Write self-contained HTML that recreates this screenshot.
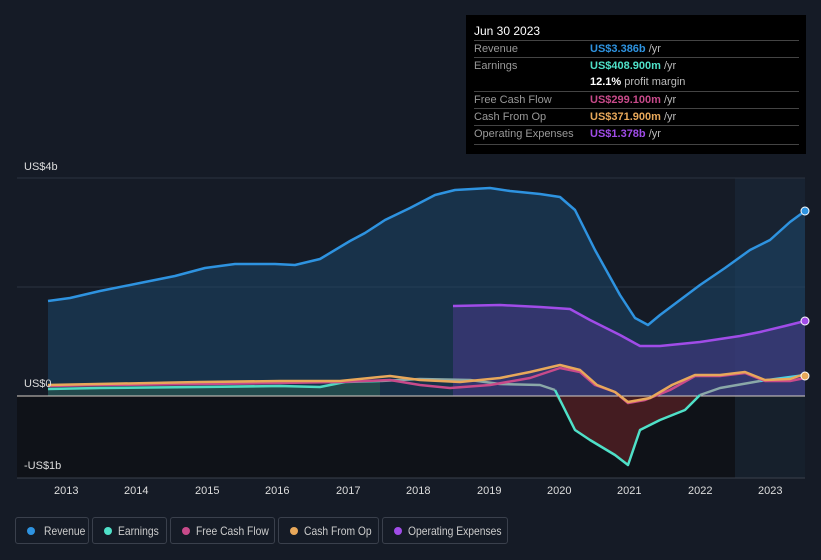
<!DOCTYPE html><html><head><style>
body{margin:0;width:821px;height:560px;background:#151b26;font-family:"Liberation Sans",sans-serif;overflow:hidden;position:relative}
.tt{position:absolute;left:466px;top:15px;width:340px;height:139px;background:#000;color:#fff;font-size:11px}
.tt .h{position:absolute;left:8px;top:9px;font-size:12px}
.row{position:absolute;left:8px;width:325px;border-top:1px solid #444;height:17px;line-height:17px}
.row span.l{color:#999;position:absolute;left:0}
.row span.v{position:absolute;left:116px;font-weight:bold;white-space:nowrap}
.row i{font-style:normal;color:#bbb;font-weight:normal}
.ax{position:absolute;color:#ddd;font-size:11px}
.lg{position:absolute;top:517px;height:27px;border:1px solid #3a404c;border-radius:3px;color:#ccc;font-size:12px;line-height:26px;box-sizing:border-box;white-space:nowrap}
.lg b{position:absolute;left:11px;top:9px;width:8px;height:8px;border-radius:50%}
.lg span{position:absolute;display:inline-block;transform:scaleX(0.86);transform-origin:left center}
</style></head><body>
<svg width="821" height="560" style="position:absolute;left:0;top:0">
<rect x="17" y="396" width="788" height="82" fill="#0f1218"/>
<rect x="735" y="178" width="70" height="300" fill="#1a2a3a" opacity="0.6"/>
<line x1="17" y1="178" x2="805" y2="178" stroke="#2c3340"/>
<line x1="17" y1="287" x2="805" y2="287" stroke="#2c3340"/>
<line x1="17" y1="478" x2="805" y2="478" stroke="#3a404c"/>
<path d="M48,301 L70,298 100,291 140,283 175,276 205,268 235,264 275,264 295,265 320,259 350,241 365,233 385,220 410,208 435,195 455,190 490,188 510,191 540,194 560,197 575,210 595,250 620,295 635,318 648,325 660,315 680,300 700,285 725,268 750,250 770,240 790,222 805,211 L805,396 48,396Z" fill="#1c4a6e" opacity="0.5"/>
<path d="M453,306 500,305 540,307 570,309 590,320 620,335 640,346 660,346 700,342 740,336 760,332 785,326 805,321 L805,396 453,396Z" fill="#4a3a8a" opacity="0.55"/>
<path d="M555,396 565,410 575,430 590,440 615,455 628,465 640,430 660,420 685,410 700,396Z" fill="#4a1e22" opacity="0.9"/>
<path d="M48,389 100,388 200,387 280,386 320,387 345,382 380,381 L380,396 48,396Z" fill="#2a5a50" opacity="0.6"/>
<line x1="17" y1="396" x2="805" y2="396" stroke="#d8d0c8" stroke-width="1"/>
<g fill="none" stroke-width="2.5" stroke-linejoin="round">
<path d="M48,301 L70,298 100,291 140,283 175,276 205,268 235,264 275,264 295,265 320,259 350,241 365,233 385,220 410,208 435,195 455,190 490,188 510,191 540,194 560,197 575,210 595,250 620,295 635,318 648,325 660,315 680,300 700,285 725,268 750,250 770,240 790,222 805,211" stroke="#2e93e0"/>
<path d="M453,306 500,305 540,307 570,309 590,320 620,335 640,346 660,346 700,342 740,336 760,332 785,326 805,321" stroke="#a04ce8"/>
<path d="M48,389 100,388 200,387 280,386 320,387 345,382 380,381" stroke="#4fd9c0"/>
<path d="M380,381 420,379 470,380 500,384 540,385 555,390" stroke="#8aa8a8"/>
<path d="M555,390 565,410 575,430 590,440 615,455 628,465 640,430 660,420 685,410 700,395" stroke="#4fe0c8"/>
<path d="M700,395 720,388 760,381" stroke="#8aa8a8"/>
<path d="M760,381 805,375" stroke="#4fd0e0"/>
<path d="M48,386 100,385 200,384 280,383 340,382 390,380 420,385 450,388 490,385 530,378 560,368 580,372 595,385 615,392 628,403 645,400 670,390 695,376 720,376 745,373 765,381 790,381 805,378" stroke="#c84a8a"/>
<path d="M48,385 200,382 280,381 340,381 390,376 420,380 460,382 500,378 530,372 560,365 580,370 597,385 615,392 628,402 650,398 672,385 695,375 720,375 745,372 765,380 790,379 805,374" stroke="#e8a85a"/>
</g>
<circle cx="805" cy="211" r="4" fill="#2e93e0" stroke="#fff"/>
<circle cx="805" cy="321" r="4" fill="#a04ce8" stroke="#fff"/>
<circle cx="805" cy="376" r="4" fill="#e8a85a" stroke="#fff"/>
</svg>
<div class="ax" style="left:24px;top:161px">US$4b</div>
<div class="ax" style="left:24px;top:378px">US$0</div>
<div class="ax" style="left:24px;top:460px">-US$1b</div>
<div class="ax" style="left:54px;top:485px">2013</div>
<div class="ax" style="left:124px;top:485px">2014</div>
<div class="ax" style="left:195px;top:485px">2015</div>
<div class="ax" style="left:265px;top:485px">2016</div>
<div class="ax" style="left:336px;top:485px">2017</div>
<div class="ax" style="left:406px;top:485px">2018</div>
<div class="ax" style="left:477px;top:485px">2019</div>
<div class="ax" style="left:547px;top:485px">2020</div>
<div class="ax" style="left:617px;top:485px">2021</div>
<div class="ax" style="left:688px;top:485px">2022</div>
<div class="ax" style="left:758px;top:485px">2023</div>
<div class="tt"><div class="h">Jun 30 2023</div>
<div class="row" style="top:25px"><span class="l">Revenue</span><span class="v" style="color:#2e93e0">US$3.386b <i>/yr</i></span></div>
<div class="row" style="top:42px"><span class="l">Earnings</span><span class="v" style="color:#4fe0c8">US$408.900m <i>/yr</i></span></div>
<div class="row" style="top:59px;border:none"><span class="v" style="color:#fff">12.1% <i>profit margin</i></span></div>
<div class="row" style="top:76px"><span class="l">Free Cash Flow</span><span class="v" style="color:#c84a8a">US$299.100m <i>/yr</i></span></div>
<div class="row" style="top:93px"><span class="l">Cash From Op</span><span class="v" style="color:#e8a85a">US$371.900m <i>/yr</i></span></div>
<div class="row" style="top:110px"><span class="l">Operating Expenses</span><span class="v" style="color:#a04ce8">US$1.378b <i>/yr</i></span></div>
<div class="row" style="top:129px;height:0"></div>
</div>
<div class="lg" style="left:15px;width:74px"><b style="background:#2e93e0"></b><span style="left:28px">Revenue</span></div>
<div class="lg" style="left:92px;width:75px"><b style="background:#4fe0c8"></b><span style="left:25px">Earnings</span></div>
<div class="lg" style="left:170px;width:105px"><b style="background:#c84a8a"></b><span style="left:25px">Free Cash Flow</span></div>
<div class="lg" style="left:278px;width:101px"><b style="background:#e8a85a"></b><span style="left:25px">Cash From Op</span></div>
<div class="lg" style="left:382px;width:126px"><b style="background:#a04ce8"></b><span style="left:25px">Operating Expenses</span></div>
</body></html>
